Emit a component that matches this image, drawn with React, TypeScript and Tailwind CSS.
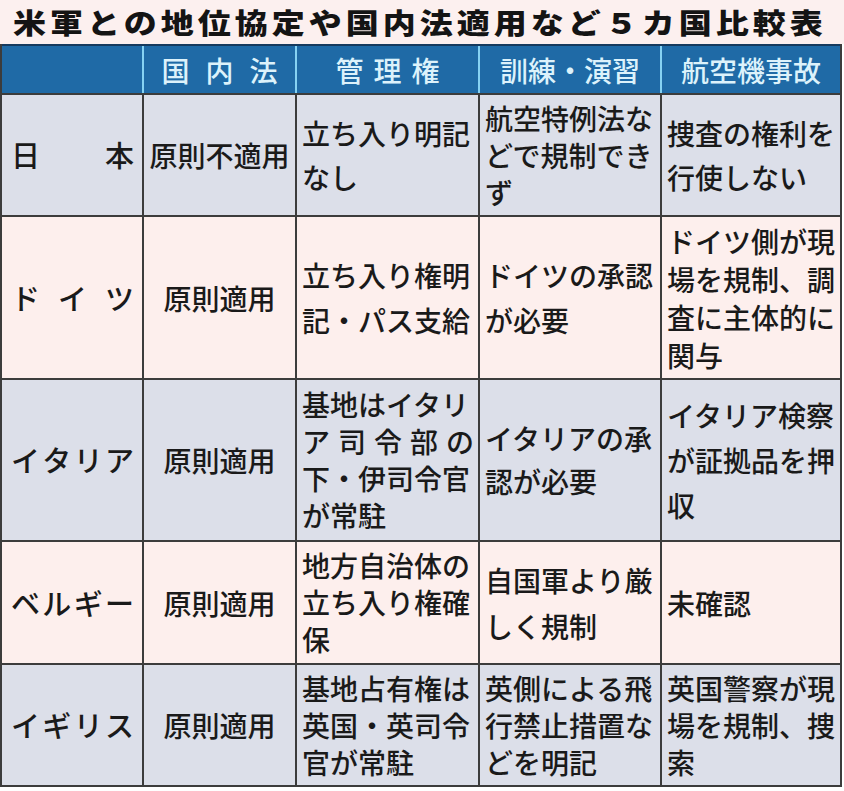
import React from 'react';

type Cell = { lines: string[]; lh: number };

interface Row {
  tone: 'gray' | 'pink';
  h: number;
  name: string[];
  law: string;
  cells: Cell[];
}

const rows: Row[] = [
  {
    tone: 'gray',
    h: 122,
    name: ['日', '本'],
    law: '原則不適用',
    cells: [
      { lines: ['立ち入り明記', 'なし'], lh: 44 },
      { lines: ['航空特例法な', 'どで規制でき', 'ず'], lh: 37 },
      { lines: ['捜査の権利を', '行使しない'], lh: 44 },
    ],
  },
  {
    tone: 'pink',
    h: 163,
    name: ['ド', 'イ', 'ツ'],
    law: '原則適用',
    cells: [
      { lines: ['立ち入り権明', '記・パス支給'], lh: 45 },
      { lines: ['ドイツの承認', 'が必要'], lh: 45 },
      { lines: ['ドイツ側が現', '場を規制、調', '査に主体的に', '関与'], lh: 38 },
    ],
  },
  {
    tone: 'gray',
    h: 162,
    name: ['イ', 'タ', 'リ', 'ア'],
    law: '原則適用',
    cells: [
      { lines: ['基地はイタリ', '|ア司令部の', '下・伊司令官', 'が常駐'], lh: 37 },
      { lines: ['イタリアの承', '認が必要'], lh: 43 },
      { lines: ['イタリア検察', 'が証拠品を押', '収'], lh: 45 },
    ],
  },
  {
    tone: 'pink',
    h: 123,
    name: ['ベ', 'ル', 'ギ', 'ー'],
    law: '原則適用',
    cells: [
      { lines: ['地方自治体の', '立ち入り権確', '保'], lh: 37 },
      { lines: ['自国軍より厳', 'しく規制'], lh: 46 },
      { lines: ['未確認'], lh: 40 },
    ],
  },
  {
    tone: 'gray',
    h: 122,
    name: ['イ', 'ギ', 'リ', 'ス'],
    law: '原則適用',
    cells: [
      { lines: ['基地占有権は', '英国・英司令', '官が常駐'], lh: 37 },
      { lines: ['英側による飛', '行禁止措置な', 'どを明記'], lh: 37 },
      { lines: ['英国警察が現', '場を規制、捜', '索'], lh: 37 },
    ],
  },
];

const Line = ({ text, lh }: { text: string; lh: number }) => {
  if (text.startsWith('|')) {
    return (
      <div className="flex justify-between" style={{ lineHeight: `${lh}px` }}>
        {text
          .slice(1)
          .split('')
          .map((c, i) => (
            <span key={i}>{c}</span>
          ))}
      </div>
    );
  }
  return (
    <div className="whitespace-nowrap" style={{ lineHeight: `${lh}px` }}>
      {text}
    </div>
  );
};

export default function App() {
  return (
    <div className="w-[844px] h-[791px] bg-white font-['Noto_Sans_CJK_JP','Noto_Sans',sans-serif] text-[#1a1a1a] overflow-hidden">
      {/* title */}
      <div className="h-[44px] bg-[#fcf0ef] flex items-center pl-[13px]">
        <h1 className="text-[33px] font-black tracking-[4px] leading-none whitespace-nowrap scale-y-[0.86] text-[#141414]">
          米軍との地位協定や国内法適用など５カ国比較表
        </h1>
      </div>

      <div className="w-[842px] border-x-2 border-b-2 border-[#3c3c3c] font-medium">
        {/* header */}
        <div className="grid grid-cols-[140px_153px_183px_182px_180px] h-[49px] bg-[#1f6aa6] border-t-2 border-[#163a5e] text-[28px] text-[#dcf2fb]">
          <div />
          <div className="border-l-2 border-[#86d2f3] flex items-center justify-center gap-[16px]">
            <span>国</span>
            <span>内</span>
            <span>法</span>
          </div>
          <div className="border-l-2 border-[#86d2f3] flex items-center justify-center gap-[10px]">
            <span>管</span>
            <span>理</span>
            <span>権</span>
          </div>
          <div className="border-l-2 border-[#86d2f3] flex items-center justify-center">訓練・演習</div>
          <div className="border-l-2 border-[#86d2f3] flex items-center justify-center">航空機事故</div>
        </div>

        {/* body */}
        {rows.map((row, r) => (
          <div
            key={r}
            className={`grid grid-cols-[140px_153px_183px_182px_180px] border-t-2 border-[#3c3c3c] text-[28px] ${
              row.tone === 'gray' ? 'bg-[#dcdfe9]' : 'bg-[#fdefed]'
            }`}
            style={{ height: row.h }}
          >
            <div className="flex items-center justify-between pl-[9px] pr-[8px] text-[29px]">
              {row.name.map((c, i) => (
                <span key={i}>{c}</span>
              ))}
            </div>
            <div className="border-l-2 border-[#3c3c3c] flex items-center justify-center whitespace-nowrap">
              {row.law}
            </div>
            {row.cells.map((cell, i) => (
              <div
                key={i}
                className="border-l-2 border-[#3c3c3c] flex flex-col justify-center pl-[5px] pr-[4px]"
              >
                {cell.lines.map((t, j) => (
                  <Line key={j} text={t} lh={cell.lh} />
                ))}
              </div>
            ))}
          </div>
        ))}
      </div>
    </div>
  );
}
